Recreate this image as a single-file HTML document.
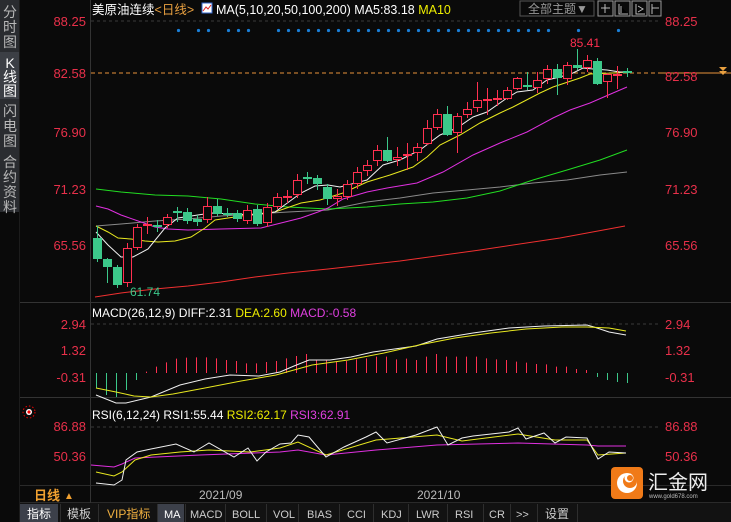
<!DOCTYPE html>
<html><head><meta charset="utf-8"><style>
html,body{margin:0;padding:0;background:#0a0a0a;width:731px;height:522px;overflow:hidden}
svg{display:block}
text{font-family:"Liberation Sans","Noto Sans CJK SC",sans-serif}
</style></head><body>
<svg id="s" width="731" height="522" xmlns="http://www.w3.org/2000/svg">
<rect width="731" height="522" fill="#0a0a0a"/>
<!-- sidebar -->
<rect x="0" y="0" width="20" height="212" fill="#2a2c30"/>
<rect x="0" y="52" width="20" height="47" fill="#3c3f45"/>
<rect x="19" y="0" width="1" height="522" fill="#1c1c1c"/>
<g font-size="14" fill="#b8b8b8" text-anchor="middle">
<text x="10" y="17">分</text><text x="10" y="32">时</text><text x="10" y="47">图</text>
<text x="10" y="68" fill="#fff" font-family="Liberation Serif">K</text><text x="10" y="82" fill="#fff">线</text><text x="10" y="96" fill="#fff">图</text>
<text x="10" y="116">闪</text><text x="10" y="131">电</text><text x="10" y="146">图</text>
<text x="10" y="167">合</text><text x="10" y="182">约</text><text x="10" y="197">资</text><text x="10" y="212">料</text>
</g>
<!-- axis lines -->
<rect x="90" y="0" width="1" height="503" fill="#333"/>
<rect x="20" y="302" width="711" height="1" fill="#333"/>
<rect x="20" y="397" width="711" height="1" fill="#333"/>
<rect x="20" y="485" width="711" height="1" fill="#2a2a2a"/>
<rect x="20" y="502" width="711" height="1" fill="#2a2a2a"/>
<rect x="90" y="485" width="1" height="18" fill="#333"/>
<!-- grid dashed -->
<line x1="91" y1="21" x2="660" y2="21" stroke="#3a3a3a" stroke-dasharray="3,3"/>
<line x1="91" y1="73" x2="660" y2="73" stroke="#e8923a" stroke-dasharray="4,3"/>
<line x1="660" y1="73" x2="731" y2="73" stroke="#e8923a"/>
<path d="M719 67h8l-4 4z M719 71h8l-4 4z" fill="#e8a040"/>
<line x1="91" y1="324" x2="660" y2="324" stroke="#3a3a3a" stroke-dasharray="3,3"/>
<line x1="91" y1="427" x2="660" y2="427" stroke="#3a3a3a" stroke-dasharray="3,3"/>
<!-- y labels -->
<g font-size="13" fill="#e8304a" text-anchor="end">
<text x="86" y="26">88.25</text><text x="86" y="78">82.58</text><text x="86" y="137">76.90</text><text x="86" y="194">71.23</text><text x="86" y="250">65.56</text>
<text x="86" y="329">2.94</text><text x="86" y="355">1.32</text><text x="86" y="382">-0.31</text>
<text x="86" y="431">86.88</text><text x="86" y="461">50.36</text>
</g>
<g font-size="13" fill="#e8304a">
<text x="665" y="26">88.25</text><text x="665" y="81">82.58</text><text x="665" y="137">76.90</text><text x="665" y="194">71.23</text><text x="665" y="250">65.56</text>
<text x="665" y="329">2.94</text><text x="665" y="355">1.32</text><text x="665" y="382">-0.31</text>
<text x="665" y="431">86.88</text><text x="665" y="461">50.36</text>
</g>
<!-- title -->
<text x="92" y="14" font-size="12.5" fill="#fff">美原油连续<tspan fill="#e8a040">&lt;日线&gt;</tspan></text>
<rect x="202" y="3" width="10" height="10" fill="#fff" stroke="#36c"/>
<path d="M203 11l3-4 2 2 3-4" stroke="#d22" fill="none"/>
<text x="216" y="14" font-size="12.5" fill="#fff">MA(5,10,20,50,100,200)  MA5:83.18 <tspan fill="#ee0">MA10</tspan></text>
<rect x="520" y="1" width="74" height="15" fill="none" stroke="#555"/>
<text x="528" y="13" font-size="12" fill="#999">全部主题▼</text>
<g stroke="#999" fill="none"><rect x="598" y="1" width="15" height="15"/><rect x="615" y="1" width="15" height="15"/><rect x="632" y="1" width="15" height="15"/><rect x="649" y="1" width="12" height="15"/></g>
<g stroke="#bbb"><path d="M605 4v9M601 8h9M619 4v10h9M621 6v7M636 4v10h9M638 6l5 3-5 3M652 4v10M652 8h7"/></g>
<!-- MACD/RSI labels -->
<text x="92" y="317" font-size="12" fill="#fff">MACD(26,12,9) DIFF:2.31 <tspan fill="#ee0">DEA:2.60</tspan> <tspan fill="#e040e0">MACD:-0.58</tspan></text>
<text x="92" y="419" font-size="12" fill="#fff">RSI(6,12,24) RSI1:55.44 <tspan fill="#ee0">RSI2:62.17</tspan> <tspan fill="#e040e0">RSI3:62.91</tspan></text>
<circle cx="29" cy="412" r="3" fill="#fff"/><circle cx="29" cy="412" r="1.6" fill="#e00"/>
<circle cx="29" cy="412" r="6" fill="none" stroke="#e00" stroke-dasharray="1.5,2"/>
<g id="g"></g>
<text x="130" y="296" font-size="12" fill="#3cc88a">61.74</text>
<text x="570" y="47" font-size="12" fill="#ff3050">85.41</text>
<!-- bottom -->
<text x="34" y="500" font-size="13" fill="#f0a030" font-weight="bold">日线</text><text x="64" y="499" font-size="10" fill="#f0a030">▲</text>
<text x="199" y="499" font-size="12" fill="#bbb">2021/09</text>
<text x="417" y="499" font-size="12" fill="#bbb">2021/10</text>
<rect x="611" y="467" width="32" height="32" rx="4" fill="#f07a18"/>
<circle cx="627" cy="483" r="10" fill="#fff"/><circle cx="630" cy="481" r="7" fill="#f07a18"/><circle cx="629" cy="478" r="4.5" fill="#fff"/><circle cx="630" cy="478" r="3" fill="#f07a18"/>
<text x="648" y="489" font-size="20" fill="#eee">汇金网</text>
<text x="649" y="498" font-size="6" fill="#bbb">www.gold678.com</text>
<!-- toolbar -->
<rect x="20" y="503" width="711" height="19" fill="#121212"/>
<rect x="20" y="504" width="38" height="18" fill="#3c404a"/>
<rect x="158" y="504" width="26" height="18" fill="#3c404a"/>
<g fill="#2e2e2e"><rect x="60" y="504" width="1" height="18"/><rect x="98" y="504" width="1" height="18"/><rect x="157" y="504" width="1" height="18"/><rect x="185" y="504" width="1" height="18"/><rect x="225" y="504" width="1" height="18"/><rect x="266" y="504" width="1" height="18"/><rect x="298" y="504" width="1" height="18"/><rect x="339" y="504" width="1" height="18"/><rect x="373" y="504" width="1" height="18"/><rect x="408" y="504" width="1" height="18"/><rect x="447" y="504" width="1" height="18"/><rect x="483" y="504" width="1" height="18"/><rect x="510" y="504" width="1" height="18"/><rect x="537" y="504" width="1" height="18"/><rect x="577" y="504" width="1" height="18"/></g>
<g font-size="12" fill="#ccc" font-family="Liberation Serif,serif">
<text x="27" y="518" fill="#fff">指标</text><text x="67" y="518">模板</text>
<text x="107" y="518" fill="#f0b040">VIP指标</text>
<text x="164" y="518" fill="#fff" font-size="11">MA</text>
<text x="190" y="518" font-size="11">MACD</text><text x="232" y="518" font-size="11">BOLL</text><text x="273" y="518" font-size="11">VOL</text>
<text x="307" y="518" font-size="11">BIAS</text><text x="347" y="518" font-size="11">CCI</text><text x="381" y="518" font-size="11">KDJ</text>
<text x="416" y="518" font-size="11">LWR</text><text x="455" y="518" font-size="11">RSI</text><text x="489" y="518" font-size="11">CR</text>
<text x="516" y="518" font-size="11">&gt;&gt;</text><text x="545" y="518">设置</text>
</g>
</svg>
<script>
var g=document.getElementById('g'),h='';
function pl(p,c){h+='<polyline fill="none" stroke="'+c+'" stroke-width="1" points="'+p+'"/>';}
var dx=[178,198,208,228,238,248];for(var x=278;x<=557;x+=10)dx.push(x);dx.push(578,618);
dx.forEach(function(x){h+='<circle cx="'+(x+.5)+'" cy="30.5" r="1.6" fill="#1a7fd8"/>';});
pl('95,297 121,293 155,289 188,286 221,282 255,277 288,273 328,269 400,261 480,250 560,238 625,226','#f03030');
pl('96,226 121,224 155,221 188,219 221,216 255,214 288,212 328,210 367,202 400,198 433,193 467,190 500,187 533,183 567,180 600,175 627,172','#8a8a8a');
pl('96,189 121,192 155,195 188,196 221,199 255,204 288,207 328,209 367,207 400,204 433,202 467,198 500,191 533,180 567,170 600,160 627,150','#22dd22');
pl('96,206 108,209 121,215 141,222 155,227 168,229 188,230 221,229 261,228 281,223 301,218 318,212 328,208 343,199 367,192 387,188 417,183 443,172 473,155 500,143 527,132 553,118 570,110 590,103 613,93 627,87','#e030e0');
pl('96,226 108,232 118,238 131,239 145,241 158,242 175,241 191,237 205,228 215,220 228,218 255,214 275,212 301,203 320,200 343,193 367,182 390,175 413,167 427,157 440,145 460,135 480,123 500,113 513,107 540,93 553,87 580,78 590,74 613,73 627,72','#e8e820');
pl('96,232 108,245 121,257 133,257 148,249 165,228 178,218 211,213 235,214 255,215 275,212 301,193 315,186 328,185 340,187 367,180 383,165 400,160 420,150 440,135 457,128 473,117 487,112 507,98 517,92 533,90 547,80 560,77 573,73 583,68 593,69 607,70 620,72 628,72','#f0f0f0');
var C=[[97,238,259,226,262],[107,259,267,258,283],[117,267,285,265,288],[127,283,248,243,287],[137,248,227,224,250],[147,226,224,217,234],[157,225,226,220,232],[167,225,217,214,228],[177,211,213,207,222],[187,212,221,208,224],[197,219,222,215,226],[207,220,206,197,223],[217,206,214,199,216],[227,213,214,208,217],[237,213,219,210,222],[247,221,210,205,224],[257,209,224,205,226],[267,223,207,203,227],[277,207,197,193,209],[287,196,196,190,203],[297,195,180,174,198],[307,177,179,172,184],[317,178,184,175,190],[327,187,199,184,205],[337,199,196,189,206],[347,197,184,180,200],[357,184,172,167,189],[367,171,165,160,176],[377,161,150,145,166],[387,150,161,137,162],[397,160,157,147,166],[407,156,154,143,170],[417,153,147,143,161],[427,144,128,120,145],[437,128,114,109,130],[447,114,135,106,136],[457,133,116,113,153],[467,115,109,102,118],[477,108,100,82,112],[487,99,99,88,115],[497,98,98,90,106],[507,99,90,87,100],[517,89,78,77,90],[527,85,87,72,90],[537,88,80,72,93],[547,79,69,65,84],[557,69,78,64,95],[567,79,65,62,85],[577,65,68,49,70],[587,68,60,55,72],[597,61,84,58,85],[607,82,74,73,98],[617,74,74,66,89],[627,71,73,68,77]];
C.forEach(function(c){var x=c[0],up=c[2]<c[1];
 if(c[1]==c[2]){up=[157,177,227,307,527,627,577].indexOf(x)<0;}
 var col=up?'#ff3050':'#3cc88a';
 var t=Math.min(c[1],c[2]),b=Math.max(c[1],c[2]);
 h+='<line x1="'+(x+.5)+'" y1="'+c[3]+'" x2="'+(x+.5)+'" y2="'+c[4]+'" stroke="'+col+'"/>';
 if(b-t<2)h+='<rect x="'+(x-4)+'" y="'+t+'" width="9" height="2" fill="'+col+'"/>';
 else if(up)h+='<rect x="'+(x-3.5)+'" y="'+(t+.5)+'" width="8" height="'+(b-t-1)+'" fill="#0a0a0a" stroke="'+col+'"/>';
 else h+='<rect x="'+(x-4)+'" y="'+t+'" width="9" height="'+(b-t)+'" fill="'+col+'"/>';
});
var zt=[186,215,214,200,242,187,270,176,298,173,326,172,354,172,382,175,410,180,438,183,466,190,494,190,522,186,550,183,578,175,606,168,634,162,662,180,690,180,718,185,746,183,774,178,802,175,830,170,858,170,886,178,914,176,942,180,970,170,998,162,1026,170,1054,170,1082,170,1110,170,1138,175,1166,178,1194,180,1222,185,1250,188,1278,192,1306,193,1334,200,1362,200,1390,207,1418,210];
for(var i=0;i<zt.length;i+=2){var x=Math.round(zt[i]/2.8+80)+.5,y=zt[i+1]/3+300;h+='<line x1="'+x+'" y1="373" x2="'+x+'" y2="'+y+'" stroke="#ff3050"/>';}
[[96,388],[106,395],[116,397],[126,390],[136,380],[597,377],[607,380],[617,382],[627,383]].forEach(function(b){h+='<line x1="'+(b[0]+.5)+'" y1="373" x2="'+(b[0]+.5)+'" y2="'+b[1]+'" stroke="#3cc88a"/>';});
pl('96,395 116,403 126,403 151,397 180,385 205,379 230,375 259,376 280,372 294,366 309,360 330,360 351,357 373,352 416,346 437,339 473,333 509,328 544,326 587,325 594,327 609,332 626,335','#f0f0f0');
pl('96,388 116,392 134,396 151,397 173,394 205,388 241,381 276,375 312,365 348,360 384,353 419,345 455,338 491,333 526,329 562,327 587,327 609,328 626,331','#e8e820');
pl('91,465 114,467 122,464 135,458 200,455 280,452 298,450 326,455 376,450 437,445 518,443 587,445 598,446 626,446','#e030e0');
pl('96,472 114,476 122,472 135,460 151,455 180,452 209,450 250,452 280,448 298,442 326,455 376,440 437,435 462,441 518,434 555,440 587,440 598,455 626,453','#e8e820');
pl('96,483 114,485 122,480 126,460 137,452 151,449 176,444 194,452 209,443 234,457 248,448 257,461 266,452 280,444 291,443 298,435 309,437 326,457 344,447 366,437 376,432 387,443 416,435 437,427 448,445 462,438 473,436 509,432 518,428 526,439 544,433 555,443 566,437 587,438 598,459 609,452 626,453','#f0f0f0');
g.innerHTML=h;
</script>
</body></html>
